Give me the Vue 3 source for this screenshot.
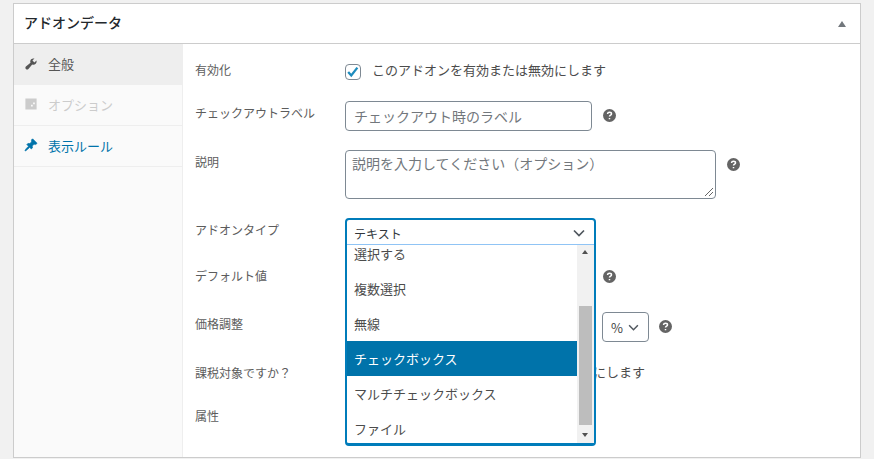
<script setup>
const tabs = [
  { id: 'general', label: '全般', state: 'active', icon: 'tools' },
  { id: 'options', label: 'オプション', state: 'disabled', icon: 'box' },
  { id: 'rules', label: '表示ルール', state: 'link', icon: 'pin' }
]

const addonTypes = ['選択する', '複数選択', '無線', 'チェックボックス', 'マルチチェックボックス', 'ファイル']
const selectedType = 'チェックボックス'
</script>

<template>
  <div class="page">
    <section class="card">
      <header class="card-head">
        <h2>アドオンデータ</h2>
        <span class="toggle"></span>
      </header>

      <div class="card-body">
        <ul class="tabs">
          <li v-for="t in tabs" :key="t.id" :class="['tab', t.state]">
            <svg class="tab-icon" viewBox="0 0 20 20" fill="currentColor">
              <path v-if="t.icon === 'tools'" d="M16.68 9.77c-1.34 1.34-3.3 1.67-4.95.99l-5.41 6.52c-.99.99-2.59.99-3.58 0s-.99-2.59 0-3.58l6.52-5.41c-.68-1.65-.35-3.61.99-4.95 1.28-1.28 3.12-1.62 4.72-1.06l-2.89 2.89 2.82 2.82 2.86-2.87c.53 1.58.18 3.39-1.08 4.65z" />
              <path v-else-if="t.icon === 'pin'" stroke="currentColor" stroke-width="1" d="M10.44 3.02l1.82-1.82 6.36 6.35-1.83 1.82c-1.05-.68-2.48-.57-3.41.36l-.75.75c-.92.93-1.04 2.35-.35 3.41l-1.83 1.82-2.41-2.41-2.8 2.79c-.42.42-3.38 2.71-3.8 2.29s1.86-3.39 2.28-3.81l2.79-2.79L4.1 9.36l1.83-1.82c1.05.69 2.48.57 3.4-.36l.75-.75c.93-.92 1.05-2.35.36-3.41z" />
              <path v-else fill-rule="evenodd" d="M2 2h16v16H2zM10 11h2.500v2.500H10zM13 8h2.500v2.500H13z" />
            </svg>
            <span>{{ t.label }}</span>
          </li>
        </ul>

        <div class="panel">
          <div class="row h23">
            <label class="lbl">有効化</label>
            <div class="field">
              <span class="check">
                <svg viewBox="0 0 16 16" width="14" height="14"><path d="M2.500 8l3.500 4 7-9" fill="none" stroke="#1e8cbe" stroke-width="2.600" /></svg>
              </span>
              <span class="txt">このアドオンを有効または無効にします</span>
            </div>
          </div>

          <div class="row h30">
            <label class="lbl">チェックアウトラベル</label>
            <div class="field">
              <div class="input"><span class="ph">チェックアウト時のラベル</span></div>
              <svg class="help" viewBox="0 0 13 13"><circle cx="6.500" cy="6.500" r="6.500" fill="#646464" /><path d="M4.500 5c.1-1.200 1-1.700 2-1.700s2 .6 2 1.600c0 1.300-2 1.300-2 2.700M6.500 9v1.300" fill="none" stroke="#fff" stroke-width="1.500" /></svg>
            </div>
          </div>

          <div class="row h49">
            <label class="lbl">説明</label>
            <div class="field">
              <div class="textarea">
                <span class="ph">説明を入力してください（オプション）</span>
                <svg class="grip" viewBox="0 0 10 10" width="10" height="10"><path d="M1 9l8-8M5 9l4-4" stroke="#666" stroke-width="1" /></svg>
              </div>
              <svg class="help" viewBox="0 0 13 13"><circle cx="6.500" cy="6.500" r="6.500" fill="#646464" /><path d="M4.500 5c.1-1.200 1-1.700 2-1.700s2 .6 2 1.600c0 1.300-2 1.300-2 2.700M6.500 9v1.300" fill="none" stroke="#fff" stroke-width="1.500" /></svg>
            </div>
          </div>

          <div class="row h26">
            <label class="lbl">アドオンタイプ</label>
            <div class="field">
              <div class="select-open">
                <div class="select-value">
                  <span>テキスト</span>
                  <svg viewBox="0 0 12 8" width="12" height="8"><path d="M1 1.500l5 5 5-5" fill="none" stroke="#50575e" stroke-width="1.700" /></svg>
                </div>
                <div class="dropdown">
                  <ul class="options">
                    <li v-for="o in addonTypes" :key="o" :class="{ sel: o === selectedType }">{{ o }}</li>
                  </ul>
                  <div class="scrollbar">
                    <span class="arrow up"></span>
                    <span class="thumb"></span>
                    <span class="arrow down"></span>
                  </div>
                </div>
              </div>
            </div>
          </div>

          <div class="row h30">
            <label class="lbl low">デフォルト値</label>
            <div class="field">
              <div class="input"></div>
              <svg class="help low" viewBox="0 0 13 13"><circle cx="6.500" cy="6.500" r="6.500" fill="#646464" /><path d="M4.500 5c.1-1.200 1-1.700 2-1.700s2 .6 2 1.600c0 1.300-2 1.300-2 2.700M6.500 9v1.300" fill="none" stroke="#fff" stroke-width="1.500" /></svg>
            </div>
          </div>

          <div class="row h30">
            <label class="lbl">価格調整</label>
            <div class="field">
              <div class="input"></div>
              <div class="unit">
                <span>%</span>
                <svg viewBox="0 0 12 8" width="11" height="7"><path d="M1 1.500l5 5 5-5" fill="none" stroke="#50575e" stroke-width="1.700" /></svg>
              </div>
              <svg class="help" viewBox="0 0 13 13"><circle cx="6.500" cy="6.500" r="6.500" fill="#646464" /><path d="M4.500 5c.1-1.200 1-1.700 2-1.700s2 .6 2 1.600c0 1.300-2 1.300-2 2.700M6.500 9v1.300" fill="none" stroke="#fff" stroke-width="1.500" /></svg>
            </div>
          </div>

          <div class="row h24">
            <label class="lbl">課税対象ですか？</label>
            <div class="field">
              <span class="check"></span>
              <span class="txt">このアドオンの追加の料金を課税対象にします</span>
            </div>
          </div>

          <div class="row h24">
            <label class="lbl">属性</label>
            <div class="field"></div>
          </div>
        </div>
      </div>
    </section>
  </div>
</template>

<style>
html, body { margin: 0; background: #f1f1f1; }
</style>

<style scoped>
.page {
  height: 459px;
  box-sizing: border-box;
  padding: 3px 13px 0 13px;
  overflow: hidden;
  font-family: "Noto Sans CJK JP", "Liberation Sans", sans-serif;
  color: #444;
}
.card { background: #fff; border: 1px solid #ccc; }
.card-head {
  height: 39px;
  display: flex;
  align-items: center;
  justify-content: space-between;
  padding: 0 13px 0 10px;
  border-bottom: 1px solid #ccc;
  box-sizing: content-box;
}
.card-head h2 { margin: 0 0 3px; font-size: 14px; font-weight: 500; color: #23282d; }
.toggle {
  width: 0; height: 0;
  margin-right: 1px;
  border-left: 4.500px solid transparent;
  border-right: 4.500px solid transparent;
  border-bottom: 6px solid #72777c;
}
.card-body { display: flex; }

.tabs {
  list-style: none;
  margin: 0;
  padding: 0;
  width: 168px;
  flex-shrink: 0;
  background: #fafafa;
  border-right: 1px solid #eee;
}
.tab {
  height: 40px;
  box-sizing: content-box;
  display: flex;
  align-items: center;
  gap: 10px;
  padding-left: 10px;
  font-size: 13px;
  border-bottom: 1px solid #eee;
}
.tab > span { margin-bottom: 2px; }
.tab-icon { margin-bottom: 2px; }
.tab.active { height: 41px; background: #eee; color: #555; border-bottom: 0; }
.tab.disabled { color: #ccc; }
.tab.link { color: #0073aa; }
.tab-icon { width: 14px; height: 14px; flex-shrink: 0; }

.panel {
  flex: 1;
  display: flex;
  flex-direction: column;
  gap: 19px;
  padding: 15px 12px 29px 12px;
}
.row { display: flex; align-items: flex-start; }
.h23 { height: 23px; }
.h24 { height: 24px; }
.h26 { height: 26px; }
.h30 { height: 30px; }
.h49 { height: 49px; }
.lbl { width: 150px; flex-shrink: 0; font-size: 12px; line-height: 24px; color: #5c5c5c; }
.lbl.low { line-height: 26px; }
.h23 .lbl { line-height: 22px; }
.field { display: flex; align-items: flex-start; position: relative; }
.txt { font-size: 13px; line-height: 22px; margin-left: 11px; color: #4c4c4c; white-space: nowrap; }

.check {
  width: 14px;
  height: 14px;
  margin-top: 5px;
  display: flex;
  align-items: center;
  justify-content: center;
  border: 1px solid #7e8993;
  border-radius: 4px;
  background: #fff;
}
.input {
  width: 247px;
  height: 30px;
  box-sizing: border-box;
  border: 1px solid #7e8993;
  border-radius: 4px;
  padding: 0 8px;
  line-height: 26px;
}
.ph { font-size: 14px; color: #72777c; }
.textarea {
  position: relative;
  width: 371px;
  height: 49px;
  box-sizing: border-box;
  border: 1px solid #7e8993;
  border-radius: 4px;
  padding: 0 6px;
  line-height: 22px;
}
.grip { position: absolute; right: 1px; bottom: 1px; }
.help { width: 13px; height: 13px; margin: 8px 0 0 11px; }
.help.low { margin-top: 7px; }
.unit {
  width: 47px;
  height: 30px;
  box-sizing: border-box;
  margin-left: 10px;
  border: 1px solid #7e8993;
  border-radius: 4px;
  display: flex;
  align-items: center;
  gap: 5px;
  padding-left: 8px;
  font-size: 13px;
  background: #fff;
}
.unit + .help { margin-left: 10px; }

.select-open {
  position: absolute;
  left: 0;
  top: 0;
  z-index: 2;
  width: 251px;
  height: 228px;
  box-sizing: border-box;
  border: 2px solid #007cba;
  border-bottom-width: 3px;
  border-radius: 4px;
  background: #fff;
  display: flex;
  flex-direction: column;
}
.select-value {
  height: 24px;
  flex-shrink: 0;
  display: flex;
  align-items: center;
  justify-content: space-between;
  padding: 2px 9px 0 7px;
  box-sizing: border-box;
  font-size: 12px;
  color: #32373c;
}
.dropdown {
  flex: 1;
  min-height: 0;
  display: flex;
  overflow: hidden;
  border-top: 1px solid #90c4f5;
}
.options {
  list-style: none;
  margin: -9px 0 0 0;
  padding: 0;
  flex: 1;
  font-size: 13px;
}
.options li { height: 35px; line-height: 35px; padding-left: 7px; color: #4c4c4c; white-space: nowrap; }
.options li.sel { background: #0073aa; color: #fff; }
.scrollbar {
  width: 17px;
  flex-shrink: 0;
  position: relative;
  background: #f1f1f1;
}
.thumb {
  position: absolute;
  left: 2px;
  right: 2px;
  top: 61px;
  height: 119px;
  background: #bdbdbd;
}
.arrow {
  position: absolute;
  left: 5px;
  width: 0; height: 0;
  border-left: 3.500px solid transparent;
  border-right: 3.500px solid transparent;
}
.arrow.up { top: 5px; border-bottom: 4px solid #505050; }
.arrow.down { bottom: 6px; border-top: 4px solid #505050; }
</style>
